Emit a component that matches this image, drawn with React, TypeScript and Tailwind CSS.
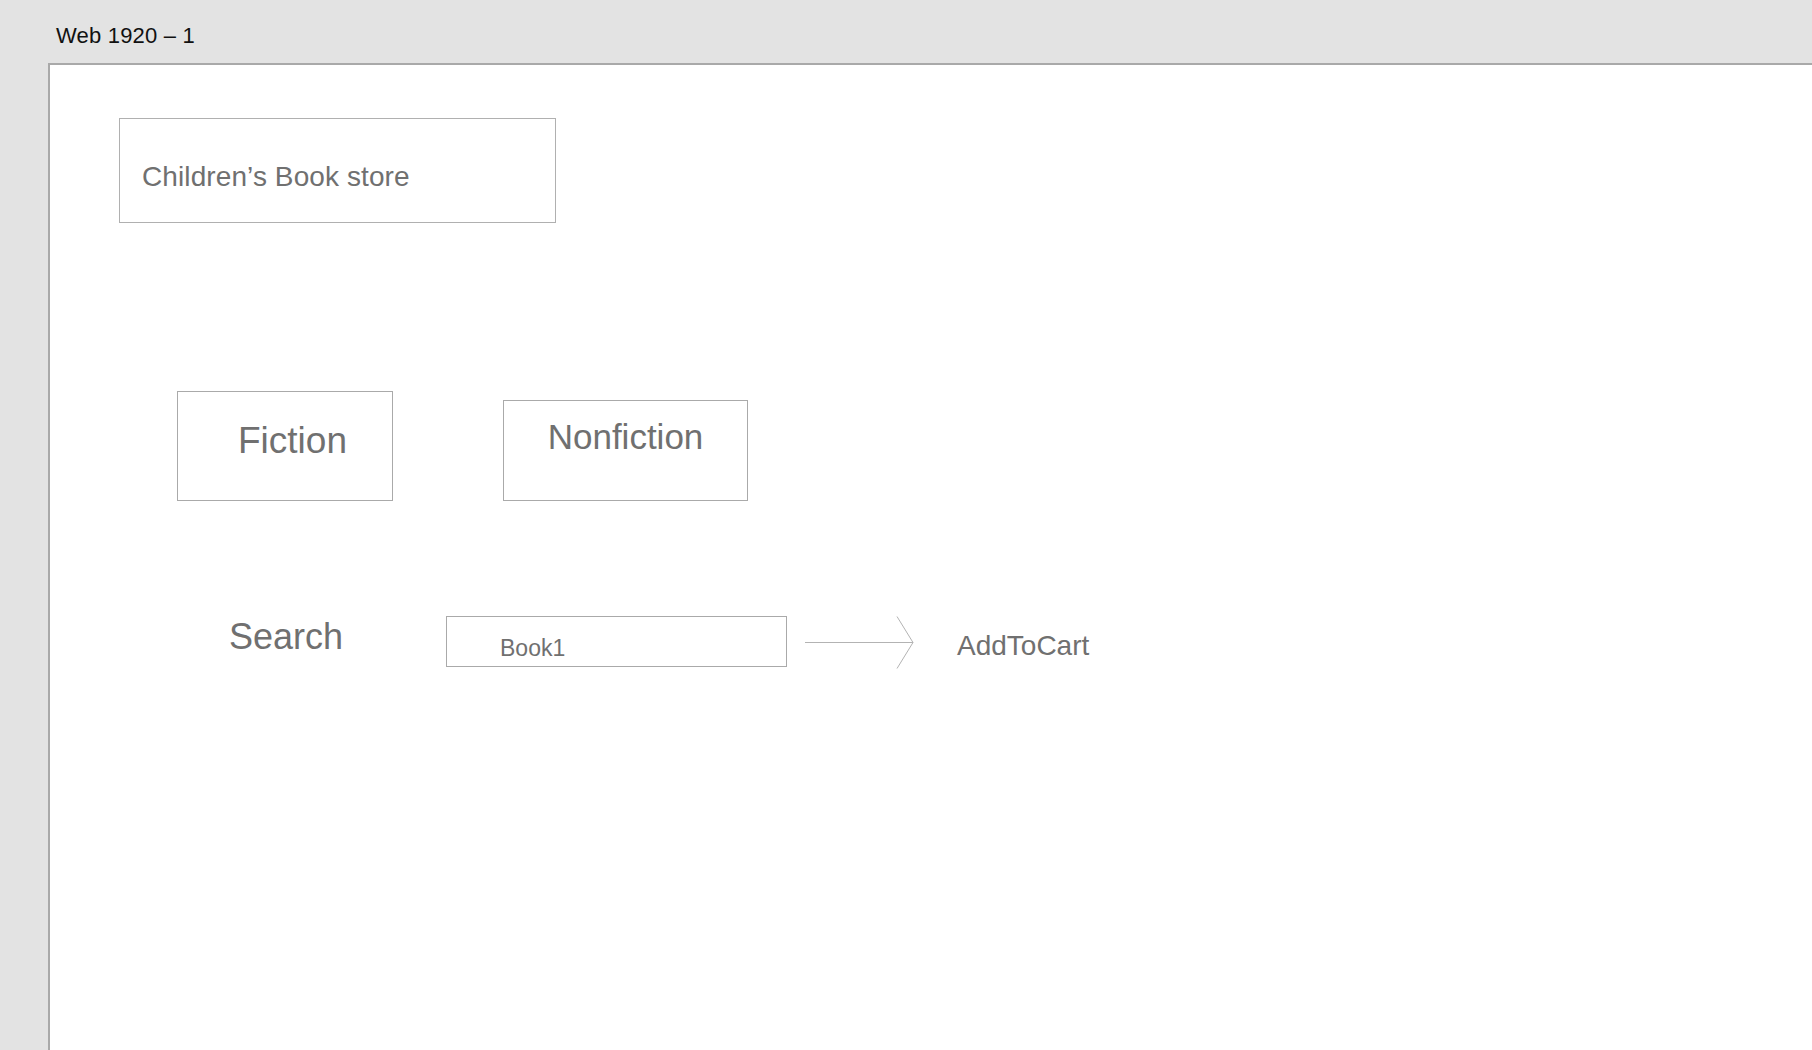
import React from "react";

export default function App() {
  const font = { fontFamily: '"Liberation Sans", Arial, sans-serif' };
  return (
    <div
      className="flex h-[1050px] w-[1812px] flex-col overflow-hidden bg-[#e3e3e3]"
      style={font}
    >
      <div className="h-[63px] shrink-0 pl-[56px] pt-[25px]">
        <div className="text-[22px] leading-[22px] tracking-[0.2px] text-[#111111]">Web 1920 – 1</div>
      </div>
      <div className="ml-[48px] flex-1 border-l-2 border-t-2 border-[#a9a9a9] bg-white">
        <div className="ml-[69px] mt-[53px] h-[105px] w-[437px] border border-[#b0b0b0] pl-[22px] pt-[44px]">
          <div className="text-[28px] leading-[28px] tracking-[0.1px] text-[#707070]">Children’s Book store</div>
        </div>

        <div className="ml-[127px] mt-[168px] flex items-end gap-[110px]">
          <div className="h-[110px] w-[216px] border border-[#aaaaaa] pl-[60px] pt-[30px]">
            <div className="text-[37px] leading-[37px] text-[#707070]">Fiction</div>
          </div>
          <div className="h-[101px] w-[245px] border border-[#aaaaaa] pt-[18px] text-center">
            <div className="text-[35px] leading-[35px] text-[#707070]">Nonfiction</div>
          </div>
        </div>

        <div className="ml-[179px] mt-[115px] flex items-start">
          <div className="mt-[3px] w-[217px] text-[36px] leading-[36px] text-[#707070]">Search</div>
          <div className="h-[51px] w-[341px] border border-[#aaaaaa] pl-[53px] pt-[20px]">
            <div className="text-[23px] leading-[23px] text-[#707070]">Book1</div>
          </div>
          <svg className="ml-[18px] shrink-0" width="109" height="53" viewBox="0 0 109 53" fill="none">
            <line x1="0" y1="26.5" x2="108" y2="26.5" stroke="#b3b3b3" strokeWidth="1" />
            <polyline points="92,0.5 108,26.5 92,52.5" stroke="#b3b3b3" strokeWidth="1" fill="none" />
          </svg>
          <div className="ml-[43px] mt-[16px] text-[28px] leading-[28px] text-[#707070]">AddToCart</div>
        </div>
      </div>
    </div>
  );
}
